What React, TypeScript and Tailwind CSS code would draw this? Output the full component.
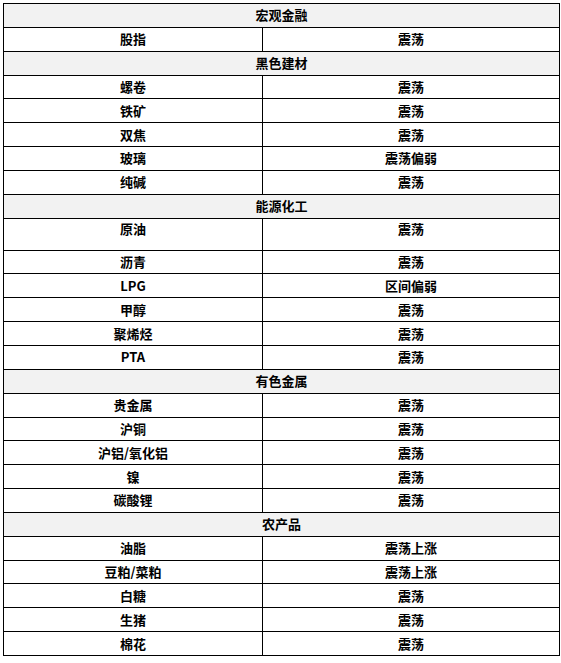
type Row = [string, string]

interface Section {
    title: string
    rows: Row[]
}

const sections: Section[] = [
    { title: "宏观金融", rows: [["股指", "震荡"]] },
    {
        title: "黑色建材",
        rows: [
            ["螺卷", "震荡"],
            ["铁矿", "震荡"],
            ["双焦", "震荡"],
            ["玻璃", "震荡偏弱"],
            ["纯碱", "震荡"],
        ],
    },
    {
        title: "能源化工",
        rows: [
            ["原油", "震荡"],
            ["沥青", "震荡"],
            ["LPG", "区间偏弱"],
            ["甲醇", "震荡"],
            ["聚烯烃", "震荡"],
            ["PTA", "震荡"],
        ],
    },
    {
        title: "有色金属",
        rows: [
            ["贵金属", "震荡"],
            ["沪铜", "震荡"],
            ["沪铝/氧化铝", "震荡"],
            ["镍", "震荡"],
            ["碳酸锂", "震荡"],
        ],
    },
    {
        title: "农产品",
        rows: [
            ["油脂", "震荡上涨"],
            ["豆粕/菜粕", "震荡上涨"],
            ["白糖", "震荡"],
            ["生猪", "震荡"],
            ["棉花", "震荡"],
        ],
    },
]

export default function App() {
    return (
        <div className="w-[561px] h-[663px] bg-white pt-[3px] pl-[3px] font-['SimSun','Noto_Sans_CJK_SC',sans-serif]">
            <table className="w-[557px] border-collapse border border-black text-[13px] font-bold text-black leading-[18px]">
                <colgroup>
                    <col className="w-[259px]" />
                    <col />
                </colgroup>
                <tbody>
                    {sections.map((sec) => (
                        <Block key={sec.title} sec={sec} />
                    ))}
                </tbody>
            </table>
        </div>
    )
}

function Block({ sec }: { sec: Section }) {
    return (
        <>
            <tr className="h-[23.85px] bg-[#f2f2f2]">
                <td colSpan={2} className="border border-black text-center p-0">
                    {sec.title}
                </td>
            </tr>
            {sec.rows.map(([name, view]) => {
                // 原油 row is taller in the source, text sits on top
                const tall = name === "原油"
                return (
                    <tr key={name} className={tall ? "h-[32px]" : "h-[23.85px]"}>
                        <td className={`border border-black text-center p-0 ${tall ? "align-top pt-[1px]" : ""}`}>{name}</td>
                        <td className={`border border-black text-center p-0 ${tall ? "align-top pt-[1px]" : ""}`}>{view}</td>
                    </tr>
                )
            })}
        </>
    )
}
